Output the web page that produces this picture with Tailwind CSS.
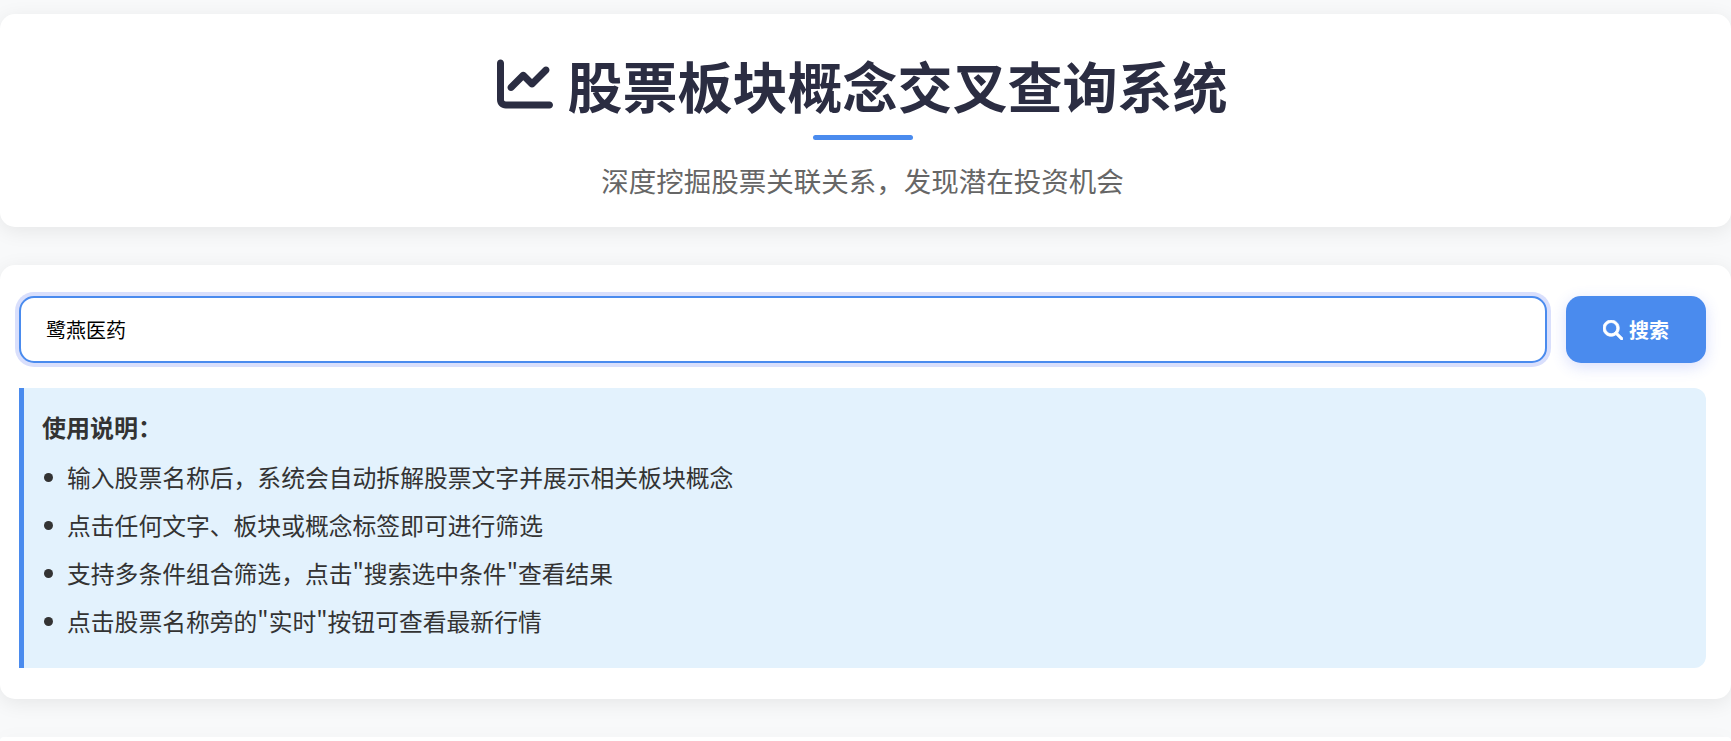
<!DOCTYPE html>
<html lang="zh-CN">
<head>
<meta charset="utf-8">
<title>股票板块概念交叉查询系统</title>
<script src="https://cdn.jsdelivr.net/npm/@tailwindcss/browser@4"></script>
</head>
<body class="h-[741px] overflow-hidden bg-[#f8f9fa] font-['Noto_Sans_CJK_SC','Noto_Sans',sans-serif] text-[#333]">
<div class="flex flex-col gap-[38px] pt-[14px]">
  <header class="flex h-[213px] flex-col items-center rounded-[15px] bg-white pt-[35px] pr-[6px] shadow-[0_4px_20px_rgba(0,0,0,0.08)]">
    <h1 class="flex h-[70px] items-center gap-[14px] text-[55px] leading-[70px] font-bold text-[#2b2d42]">
      <svg class="h-[56px] w-[56px] fill-current" viewBox="0 0 512 512"><path d="M64 64c0-17.7-14.3-32-32-32S0 46.3 0 64V400c0 44.2 35.8 80 80 80H480c17.7 0 32-14.3 32-32s-14.3-32-32-32H80c-8.8 0-16-7.2-16-16V64zm406.6 86.6c12.5-12.5 12.5-32.8 0-45.3s-32.8-12.5-45.3 0L320 210.7l-57.4-57.4c-12.5-12.5-32.8-12.5-45.3 0l-112 112c-12.5 12.5-12.5 32.8 0 45.3s32.8 12.5 45.3 0L240 221.3l57.4 57.4c12.5 12.5 32.8 12.5 45.3 0l128-128z"/></svg>
      <span>股票板块概念交叉查询系统</span>
    </h1>
    <div class="mt-[16px] h-[5px] w-[100px] rounded-[3px] bg-[#4a8bee]"></div>
    <p class="mt-[16px] text-[27.5px] leading-[48px] text-[#666]">深度挖掘股票关联关系，发现潜在投资机会</p>
  </header>
  <section class="h-[434px] rounded-[15px] bg-white pt-[31px] pr-[25px] pl-[19px] shadow-[0_4px_20px_rgba(0,0,0,0.08)]">
    <div class="flex items-center gap-[19px]">
      <input type="text" value="鹭燕医药" class="h-[67px] min-w-0 flex-1 rounded-[15px] border-2 border-[#4a8bee] bg-white pl-[25px] text-[20px] text-black shadow-[0_0_0_4px_rgba(67,97,238,0.2)] outline-none">
      <button class="flex h-[67px] w-[140px] items-center justify-center gap-[6px] rounded-[15px] bg-[#4a8bee] text-[20px] font-bold text-white shadow-[0_4px_15px_rgba(67,97,238,0.2)]">
        <svg class="h-[20px] w-[20px] fill-current stroke-current stroke-[20px]" viewBox="0 0 512 512"><path d="M416 208c0 45.9-14.9 88.3-40 122.7L502.6 457.4c12.5 12.5 12.5 32.8 0 45.3s-32.8 12.5-45.3 0L330.7 376c-34.4 25.2-76.8 40-122.7 40C93.1 416 0 322.9 0 208S93.1 0 208 0S416 93.1 416 208zM208 352a144 144 0 1 0 0-288 144 144 0 1 0 0 288z"/></svg>
        <span>搜索</span>
      </button>
    </div>
    <div class="mt-[25px] h-[280px] rounded-[12px] rounded-l-none border-l-[5px] border-[#4a8bee] bg-[#e3f2fd] pt-[19px] pl-[18px]">
      <p class="h-[40px] text-[24px] leading-[40px] font-bold">使用说明：</p>
      <ul class="mt-[6px] text-[23.8px] leading-[48px]">
        <li class="flex items-center gap-[14px] pl-[2px]"><span class="h-[9px] w-[9px] rounded-full bg-[#333]"></span><span>输入股票名称后，系统会自动拆解股票文字并展示相关板块概念</span></li>
        <li class="flex items-center gap-[14px] pl-[2px]"><span class="h-[9px] w-[9px] rounded-full bg-[#333]"></span><span>点击任何文字、板块或概念标签即可进行筛选</span></li>
        <li class="flex items-center gap-[14px] pl-[2px]"><span class="h-[9px] w-[9px] rounded-full bg-[#333]"></span><span>支持多条件组合筛选，点击"搜索选中条件"查看结果</span></li>
        <li class="flex items-center gap-[14px] pl-[2px]"><span class="h-[9px] w-[9px] rounded-full bg-[#333]"></span><span>点击股票名称旁的"实时"按钮可查看最新行情</span></li>
      </ul>
    </div>
  </section>
  <div class="h-[4px] rounded-t-[4px] bg-white shadow-[0_4px_20px_rgba(0,0,0,0.08)]"></div>
</div>
</body>
</html>
